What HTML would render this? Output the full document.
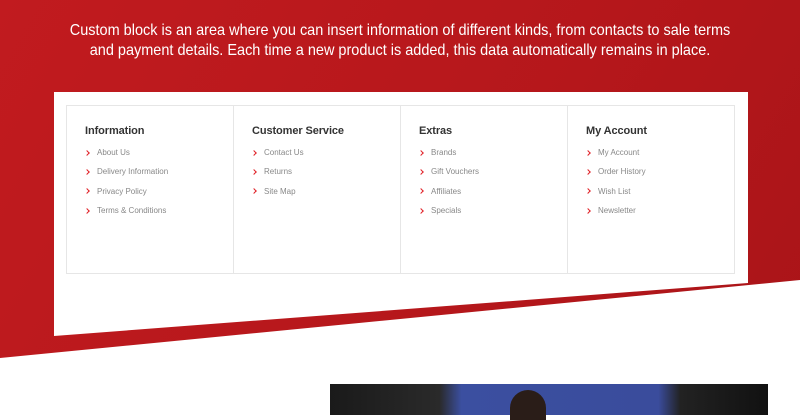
<!DOCTYPE html>
<html><head><style>
*{margin:0;padding:0;box-sizing:border-box}
body{width:800px;height:415px;overflow:hidden;background:#fff;position:relative;font-family:"Liberation Sans",sans-serif}
.red{position:absolute;left:0;top:0;width:800px;height:415px;background:linear-gradient(120deg,#c11b1f 0%,#b5171b 60%,#a91418 100%)}
.hl{position:absolute;left:0;top:0}
.intro{position:absolute;left:0;top:21px;width:800px;text-align:center;color:#fff;font-size:16px;line-height:20px;transform:scaleX(0.905);transform-origin:400px 0}
.box{position:absolute;left:66px;top:105px;width:669px;height:169px;border:1px solid #e6e6e6;display:flex}
.col{flex:1;border-right:1px solid #e6e6e6;padding:19px 0 0 18px}
.col:last-child{border-right:none}
.col h3{font-size:11px;font-weight:bold;color:#333;margin-bottom:11px;letter-spacing:-.1px}
.col li{list-style:none;font-size:8px;color:#888;height:19.4px;position:relative;padding-left:12px}
.col li:before{content:"";position:absolute;left:0px;top:2.5px;width:3px;height:3px;border-right:1.6px solid #e01e25;border-bottom:1.6px solid #e01e25;transform:rotate(-45deg)}
.photo{position:absolute;left:330px;top:384px;width:438px;height:31px;background:linear-gradient(90deg,#1a1a1a 0%,#2a2a2a 25%,#3b4fa0 30%,#3a4c9c 75%,#222 80%,#111 100%)}
.face{position:absolute;left:510px;top:390px;width:36px;height:30px;border-radius:18px 18px 0 0;background:#2a1d18}
</style></head><body>
<div class="red"></div>
<svg class="hl" width="800" height="415">
<polygon points="54,92 748,92 748,283 54,336" fill="#fff"/>
<polygon points="0,358 800,280 800,415 0,415" fill="#fff"/>
</svg>
<div class="intro">Custom block is an area where you can insert information of different kinds, from contacts to sale terms<br>and payment details. Each time a new product is added, this data automatically remains in place.</div>
<div class="box">
<div class="col"><h3>Information</h3><ul><li>About Us</li><li>Delivery Information</li><li>Privacy Policy</li><li>Terms &amp; Conditions</li></ul></div>
<div class="col"><h3>Customer Service</h3><ul><li>Contact Us</li><li>Returns</li><li>Site Map</li></ul></div>
<div class="col"><h3>Extras</h3><ul><li>Brands</li><li>Gift Vouchers</li><li>Affiliates</li><li>Specials</li></ul></div>
<div class="col"><h3>My Account</h3><ul><li>My Account</li><li>Order History</li><li>Wish List</li><li>Newsletter</li></ul></div>
</div>
<div class="photo"></div><div class="face"></div>
</body></html>
